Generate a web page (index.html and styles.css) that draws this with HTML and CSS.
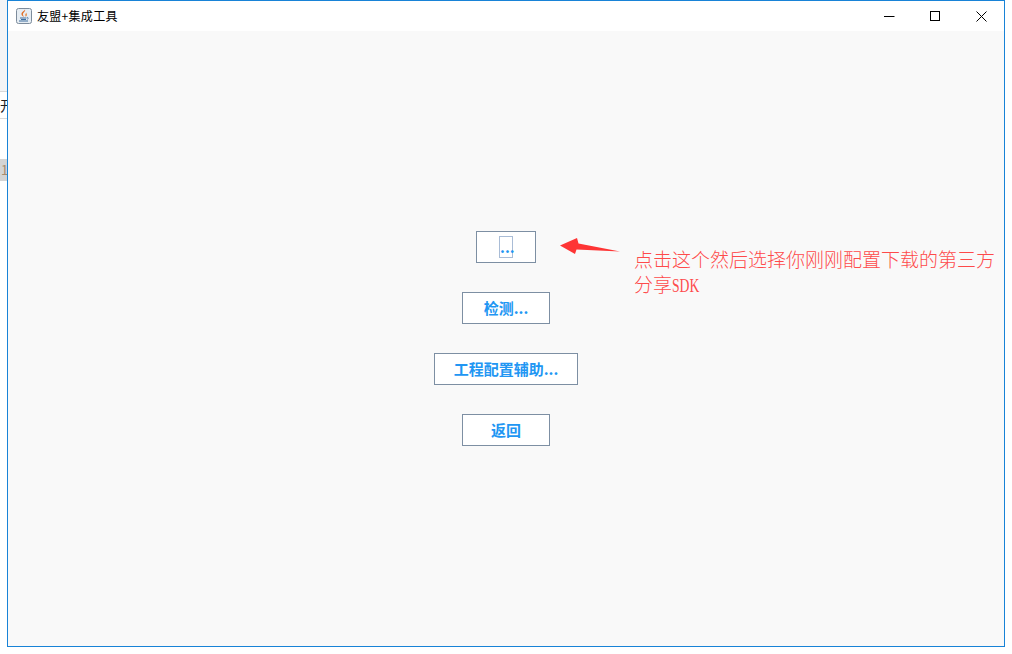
FILE: index.html
```html
<!DOCTYPE html>
<html lang="zh-CN">
<head>
    <meta charset="UTF-8">
    <title>友盟+集成工具</title>
    <link rel="stylesheet" href="styles.css">
</head>
<body>
    <!-- editor peeking out behind the window -->
    <div class="behind">
        <div class="behind-tabs"><span class="behind-char">开</span></div>
        <div class="behind-gutter">1</div>
    </div>

    <div class="window">
        <div class="titlebar">
            <svg class="app-icon" width="16" height="16" viewBox="0 0 16 16">
                <rect x="0.5" y="0.5" width="15" height="15" rx="2" fill="#e6edf3" stroke="#7d8c9c"/>
                <path d="M9 1.500C10 3.500 6.500 4.500 7 7c.2.800.7 1.300 1 2C6.500 8.200 5 7 5.500 5.200 6 3.500 8.500 3.200 9 1.500z" fill="#e0702a"/>
                <path d="M10.500 4.500c-.5 1-1.500 1.500-1.300 2.700.1.600.4 1 .5 1.500 1-.7 1.700-1.700 1.100-2.800-.2-.4-.3-.8-.3-1.400z" fill="#e8924f"/>
                <path d="M4 10h6.500M5 11.500h5M3 13h9" stroke="#3f6f9f" stroke-width="1" fill="none"/>
                <path d="M11 9.500c1.500-.3 1.800 1.200 0 1.800" stroke="#3f6f9f" stroke-width=".8" fill="none"/>
            </svg>
            <span class="title-text">友盟+集成工具</span>
            <div class="controls">
                <button class="ctl">
                    <svg width="11" height="11" viewBox="0 0 11 11"><path d="M0 5.500h10.500" stroke="#000"/></svg>
                </button>
                <button class="ctl">
                    <svg width="11" height="11" viewBox="0 0 11 11"><rect x="0.500" y="0.500" width="9" height="9" fill="none" stroke="#000"/></svg>
                </button>
                <button class="ctl">
                    <svg width="11" height="11" viewBox="0 0 11 11"><path d="M0.500 0.500l10 10M10.500 0.500l-10 10" stroke="#000"/></svg>
                </button>
            </div>
        </div>

        <div class="content">
            <button class="action action-browse"><span class="focus-box">...</span></button>
            <button class="action action-mid">检测...</button>
            <button class="action action-wide">工程配置辅助...</button>
            <button class="action action-mid">返回</button>
        </div>

        <!-- annotation drawn over the screenshot -->
        <svg class="arrow" width="62" height="20" viewBox="0 0 62 20">
            <path d="M0 8.500L17 1l1.500 5.500L60 14.500 16.500 12.500 15 17z" fill="#fe3535"/>
        </svg>
        <p class="note">点击这个然后选择你刚刚配置下载的第三方<br>分享<span class="note-latin">SDK</span></p>
    </div>
</body>
</html>
```

FILE: styles.css
```css
body {
    margin: 0;
    width: 1012px;
    height: 654px;
    position: relative;
    overflow: hidden;
    background-color: #fff;
    font-family: "Noto Sans CJK SC", "Liberation Sans", sans-serif;
}

.behind {
    position: absolute;
    left: 0;
    top: 0;
    width: 7px;
    height: 646px;
    background: linear-gradient(#f3f4f6 91px, #fff 91px);
    overflow: hidden;
}

.behind-tabs {
    height: 26px;
    margin-top: 91px;
    border-top: 1px solid #d9d9d9;
    border-bottom: 1px solid #d9d9d9;
    font-size: 14px;
    line-height: 26px;
    color: #222;
}

.behind-char {
    display: block;
    width: 14px;
}

.behind-gutter {
    height: 22px;
    margin-top: 40px;
    background-color: #d4d4d4;
    color: #a58b6c;
    font-size: 13px;
    line-height: 22px;
    padding-left: 1px;
}

.window {
    position: absolute;
    left: 7px;
    top: 0;
    width: 996px;
    height: 645px;
    border: 1px solid #1883d7;
    background-color: #f9f9f9;
    display: flex;
    flex-direction: column;
}

.titlebar {
    height: 30px;
    background-color: #fff;
    display: flex;
    align-items: center;
    padding-left: 8px;
    flex-shrink: 0;
}

.app-icon {
    margin-right: 5px;
}

.title-text {
    font-size: 12px;
    letter-spacing: 0.3px;
    color: #000;
    margin-bottom: 2px;
}

.controls {
    margin-left: auto;
    display: flex;
}

.ctl {
    width: 46px;
    height: 30px;
    padding: 0;
    border: none;
    background: none;
    display: flex;
    align-items: center;
    justify-content: center;
}

.content {
    flex: 1;
    display: flex;
    flex-direction: column;
    align-items: center;
    gap: 29px;
    padding-top: 200px;
}

.action {
    height: 32px;
    padding: 0 0 2px;
    border: 1px solid #7d8fa3;
    background-color: #fff;
    color: #2196f3;
    font-family: "Noto Sans CJK SC", sans-serif;
    font-size: 15px;
    font-weight: 700;
    display: flex;
    align-items: center;
    justify-content: center;
}

.action-browse {
    width: 60px;
    padding-bottom: 0;
}

.action-mid {
    width: 88px;
}

.action-wide {
    width: 144px;
}

.focus-box {
    width: 12px;
    height: 20px;
    border: 1px solid #a9bcd6;
    line-height: 20px;
    text-align: center;
}

.arrow {
    position: absolute;
    left: 552px;
    top: 236px;
}

.note {
    position: absolute;
    left: 626px;
    top: 245px;
    width: 365px;
    margin: 0;
    color: #fe4a4a;
    font-size: 19px;
    line-height: 25px;
    font-weight: 300;
}

/* half-width latin, squeezed like the bitmap font in the reference */
.note-latin {
    display: inline-block;
    line-height: 0;
    font-family: "Liberation Serif", serif;
    transform: scaleX(0.72);
    transform-origin: left;
}
```
